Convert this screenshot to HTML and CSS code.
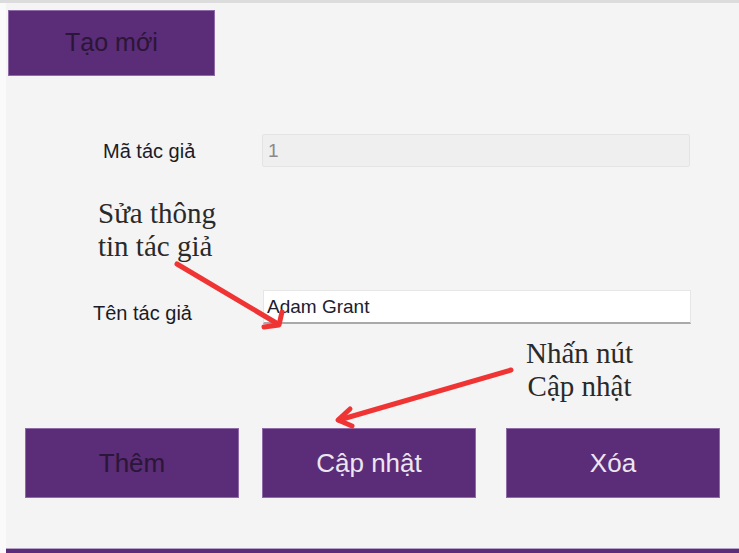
FILE: index.html
```html
<!DOCTYPE html>
<html lang="vi">
<head>
<meta charset="utf-8">
<title>Tác giả</title>
<link rel="stylesheet" href="styles.css">
</head>
<body>
<div class="screen">
  <div class="panel">
    <div class="toolbar">
      <button class="btn btn-new">Tạo mới</button>
    </div>
    <div class="row row-id">
      <label class="label label-id">Mã tác giả</label>
      <div class="field field-readonly">1</div>
    </div>
    <div class="row row-name">
      <label class="label label-name">Tên tác giả</label>
      <div class="field field-edit">Adam Grant</div>
    </div>
    <div class="actions">
      <button class="btn btn-action btn-dark-text">Thêm</button>
      <button class="btn btn-action">Cập nhật</button>
      <button class="btn btn-action btn-delete">Xóa</button>
    </div>
    <div class="spacer"></div>
    <div class="footer"></div>
  </div>

  <div class="note note-edit">Sửa thông<br>tin tác giả</div>
  <div class="note note-update">Nhấn nút<br>Cập nhật</div>
  <svg class="arrows" width="739" height="553" viewBox="0 0 739 553">
    <g fill="none" stroke="#f03434" stroke-width="5" stroke-linecap="round" stroke-linejoin="round">
      <line x1="177" y1="264" x2="278" y2="324"/>
      <polyline points="264,327 279,325 282,312"/>
      <line x1="511" y1="370" x2="339" y2="420"/>
      <polyline points="350,409 338,420 352,426"/>
    </g>
  </svg>
</div>
</body>
</html>
```

FILE: styles.css
```css
* { box-sizing: border-box; }
html, body { margin: 0; padding: 0; }
body {
  width: 739px;
  height: 553px;
  overflow: hidden;
  background: #fafafa;
  font-family: "Liberation Sans", Arial, sans-serif;
}
.screen {
  position: relative;
  width: 739px;
  height: 553px;
  border-top: 3px solid #dcdcdc;
}
.panel {
  margin-left: 6px;
  height: 550px;
  background: #f4f4f4;
  display: flex;
  flex-direction: column;
}
.btn {
  background: #5b2c77;
  border: 1px solid #8e6aa6;
  font-family: "Liberation Sans", Arial, sans-serif;
  padding: 0;
  cursor: pointer;
}
.toolbar {
  margin-top: 7px;
  padding-left: 2px;
  display: flex;
}
.btn-new {
  width: 207px;
  height: 66px;
  color: #2a1636;
  font-size: 25px;
  padding-bottom: 2px;
}
.row {
  display: flex;
  align-items: center;
}
.row-id { margin-top: 58px; height: 33px; }
.row-name { margin-top: 123px; height: 34px; }
.label {
  font-size: 20px;
  color: #1b1b26;
}
.label-id { padding-left: 97px; width: 256px; padding-top: 2px; }
.label-name { padding-left: 87px; width: 257px; padding-top: 12px; }
.field {
  width: 428px;
  height: 100%;
  display: flex;
  align-items: center;
  font-size: 19px;
}
.field-readonly {
  background: #efefef;
  border: 1px solid #e4e4e4;
  border-radius: 2px;
  color: #8a8a8a;
  padding-left: 5px;
}
.field-edit {
  background: #ffffff;
  border: 1px solid #e6e6e6;
  border-bottom: 2px solid #a9a9a9;
  color: #202030;
  padding-left: 3px;
  padding-top: 1px;
}
.actions {
  margin-top: 104px;
  display: flex;
  padding-left: 19px;
}
.btn-action {
  flex: 0 0 214px;
  height: 70px;
  color: #ece6f0;
  font-size: 26px;
  margin-right: 23px;
}
.btn-delete { margin-left: 7px; }
.btn-dark-text { color: #2a1636; }
.spacer { flex: 1; }
.footer {
  height: 5px;
  background: #5b2c77;
  border-top: 1px solid #b7a3c6;
}
.note {
  position: absolute;
  font-family: "Liberation Serif", "Times New Roman", serif;
  font-size: 29px;
  line-height: 33px;
  color: #2a2a2a;
}
.note-edit { left: 98px; top: 194px; }
.note-update { left: 526px; top: 334px; text-align: center; }
.arrows {
  position: absolute;
  left: 0;
  top: -3px;
  pointer-events: none;
}
```
